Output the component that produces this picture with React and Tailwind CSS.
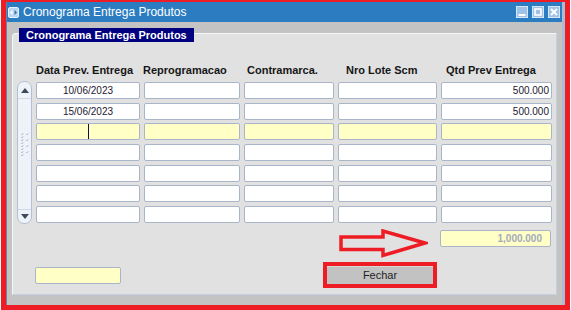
import React from "react";

const cols = [
  { w: "w-[104px]", label: "Data Prev. Entrega", pad: "pl-[1px]" },
  { w: "w-[96px]", label: "Reprogramacao", pad: "pl-0" },
  { w: "w-[90px]", label: "Contramarca.", pad: "pl-[4px]" },
  { w: "w-[99px]", label: "Nro Lote Scm", pad: "pl-[9px]" },
  { w: "w-[111px]", label: "Qtd Prev Entrega", pad: "pl-[6px]" },
];

const rows = [
  { date: "10/06/2023", qtd: "500.000" },
  { date: "15/06/2023", qtd: "500.000" },
  { current: true },
  {},
  {},
  {},
  {},
];

const Field = ({ w, yellow, children, className = "" }) => (
  <div
    className={`${w} h-[17px] shrink-0 border border-[#a9b6c9] rounded-[2px] flex items-center text-[10px] text-[#1c1830] ${
      yellow ? "bg-[#ffffc6]" : "bg-white"
    } ${className}`}
  >
    {children}
  </div>
);

const TitleIcon = () => (
  <svg width="11" height="11" viewBox="0 0 11 11">
    <rect x="0.5" y="0.5" width="10" height="10" rx="1.5" fill="#b9d6f2" stroke="#e8f2fc" />
    <path d="M2 5.5 L4.5 3 L4.5 8 Z" fill="#ffffff" />
    <path d="M9 5.5 L6.5 3 L6.5 8 Z" fill="#3a6ea5" />
  </svg>
);

const WinButton = ({ children }) => (
  <div className="w-[12px] h-[12px] bg-[#9fc3e8] border border-[#d6e7f8] flex items-center justify-center">
    <svg width="10" height="10" viewBox="0 0 10 10">
      {children}
    </svg>
  </div>
);

const Scrollbar = () => (
  <div className="w-[15px] h-[143px] shrink-0 -mt-[1px] rounded-[7px] border border-[#b3c0d2] bg-[#eef3fa] flex flex-col items-center">
    <div className="w-full h-[17px] border-b border-[#d0d9e6] flex items-center justify-center">
      <svg width="8" height="5" viewBox="0 0 8 5">
        <path d="M0 5 L4 0 L8 5 Z" fill="#3c4a5c" />
      </svg>
    </div>
    <div className="flex-1 flex items-center justify-center pb-[20px]">
      <svg width="8" height="24" viewBox="0 0 8 24">
        {[0, 6, 12, 18].map((y) => (
          <g key={y} stroke="#8c9bb0" strokeWidth="1">
            <path d={`M0.5 ${y + 3} L2 ${y + 1.5}`} />
            <path d={`M5.5 ${y + 3} L7 ${y + 1.5}`} />
            <path d={`M0.5 ${y + 6} L2 ${y + 4.5}`} />
          </g>
        ))}
      </svg>
    </div>
    <div className="w-full h-[14px] border-t border-[#d0d9e6] flex items-center justify-center">
      <svg width="8" height="5" viewBox="0 0 8 5">
        <path d="M0 0 L8 0 L4 5 Z" fill="#3c4a5c" />
      </svg>
    </div>
  </div>
);

export default function App() {
  return (
    <div className="w-[571px] h-[310px] bg-white px-[1px] overflow-hidden font-['Liberation_Sans',Arial,sans-serif]">
      <div className="h-full border-[#ee1c24] border-l-[5px] border-r-[5px] border-t-[2px] border-b-[5px] flex flex-col">
        <div className="flex-1 flex flex-col bg-[#c3c3c3] border-l border-[#6f819b] border-r-[3px] border-r-[#a9bdd4]">
          {/* Title bar */}
          <div className="h-[20px] shrink-0 bg-[#2c7cc1] flex items-center pl-[1px] pr-[1px]">
            <TitleIcon />
            <span className="ml-[4px] text-[12px] text-white leading-none">Cronograma Entrega Produtos</span>
            <div className="ml-auto flex gap-[4px] pr-[1px]">
              <WinButton>
                <rect x="1.5" y="7" width="7" height="2" fill="#ffffff" />
              </WinButton>
              <WinButton>
                <rect x="2" y="2" width="6" height="6" fill="none" stroke="#ffffff" strokeWidth="1.6" />
              </WinButton>
              <WinButton>
                <path d="M2 2 L8 8 M8 2 L2 8" stroke="#ffffff" strokeWidth="2" />
              </WinButton>
            </div>
          </div>

          {/* Body */}
          <div className="flex-1 pl-[5px] pt-[11px]">
            <div className="w-[545px] h-[262px] bg-[#e1e1e1] border border-[#c3d0e2] border-t-[#f4f6fa] border-l-[#f4f6fa] rounded-tl-[4px] flex flex-col">
              <div className="-mt-[6px] ml-[6px] w-fit h-[14px] bg-[#000080] px-[7px] text-white text-[11px] font-bold leading-[14px]">
                Cronograma Entrega Produtos
              </div>

              {/* Header */}
              <div className="mt-[22px] h-[13px] pl-[22px] flex gap-[4px] text-[11px] font-bold leading-[13px] text-[#161616]">
                {cols.map((c) => (
                  <div key={c.label} className={`${c.w} ${c.pad} shrink-0 whitespace-nowrap`}>
                    {c.label}
                  </div>
                ))}
              </div>

              {/* Rows */}
              <div className="mt-[5px] pl-[4px] flex items-start gap-[4px]">
                <Scrollbar />
                <div className="flex flex-col gap-[3.67px]">
                  {rows.map((r, i) => (
                    <div key={i} className="flex gap-[4px]">
                      <Field w={cols[0].w} yellow={r.current} className={r.current ? "justify-start" : "justify-center"}>
                        {r.date}
                        {r.current && <div className="w-[1px] h-[15px] bg-[#10104a] ml-[51px]" />}
                      </Field>
                      <Field w={cols[1].w} yellow={r.current} />
                      <Field w={cols[2].w} yellow={r.current} />
                      <Field w={cols[3].w} yellow={r.current} />
                      <Field w={cols[4].w} yellow={r.current} className="justify-end pr-[2px]">
                        {r.qtd}
                      </Field>
                    </div>
                  ))}
                </div>
              </div>

              {/* Total */}
              <div className="mt-[5px] pr-[5px] flex justify-end items-start gap-[12px]">
                <svg width="89" height="29" viewBox="0 0 89 29">
                  <path
                    d="M2 8 L44 8 L44 2 L86 14 L44 26.5 L44 20.5 L2 20.5 Z"
                    fill="none"
                    stroke="#ee1c24"
                    strokeWidth="3.5"
                    strokeLinejoin="miter"
                  />
                </svg>
                <Field w="w-[111px]" yellow className="mt-[1px] justify-end pr-[8px] font-bold text-[#a3abbd]">
                  1,000.000
                </Field>
              </div>

              {/* Bottom */}
              <div className="mt-[4px] pl-[22px] flex items-center">
                <Field w="w-[86px]" yellow />
                <div className="ml-[202px] w-[114px] h-[26px] border-[4px] border-[#ee1c24] flex">
                  <button className="flex-1 bg-[#c2c2c2] border-t border-[#d8d8d8] text-[11px] text-[#1e1e1e] leading-none">
                    Fechar
                  </button>
                </div>
              </div>
            </div>
          </div>
        </div>
      </div>
    </div>
  );
}
